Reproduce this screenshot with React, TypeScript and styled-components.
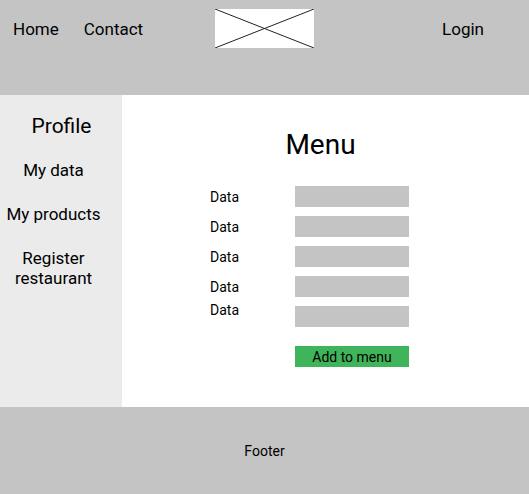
import React from 'react';
import styled, { createGlobalStyle } from 'styled-components';

const GlobalStyle = createGlobalStyle`
  html, body {
    margin: 0;
    padding: 0;
    background: #fff;
  }
  body {
    font-family: Roboto, "Liberation Sans", sans-serif;
    color: #000;
  }
`;

const Page = styled.div`
  display: flex;
  flex-direction: column;
  width: 529px;
  height: 494px;
`;

const Header = styled.header`
  display: flex;
  align-items: flex-start;
  height: 95px;
  padding: 9px 45px 0 13px;
  box-sizing: border-box;
  background: #c4c4c4;
`;

const NavLink = styled.span<{ $gap?: number }>`
  font-size: 17px;
  line-height: 41px;
  margin-right: ${(p) => p.$gap ?? 0}px;
`;

const Logo = styled.svg`
  display: block;
  width: 99px;
  height: 39px;
  background: #fff;
`;

const Spacer = styled.div`
  flex: 1;
`;

const Body = styled.div`
  display: flex;
  height: 312px;
`;

const Sidebar = styled.aside`
  display: flex;
  flex-direction: column;
  align-items: center;
  gap: 24px;
  width: 122px;
  padding: 21px 15px 0 0;
  box-sizing: border-box;
  background: #ebebeb;
`;

const SideTitle = styled.div`
  margin-left: 16px;
  font-size: 21px;
  line-height: 20px;
`;

const SideItem = styled.div`
  font-size: 17px;
  line-height: 20px;
  text-align: center;
`;

const Main = styled.main`
  flex: 1;
  display: flex;
  flex-direction: column;
  align-items: center;
  padding-top: 33px;
  background: #fff;
`;

const Title = styled.h1`
  margin: 0 0 0 -10px;
  font-size: 28px;
  font-weight: 400;
  line-height: 34px;
`;

const Form = styled.div`
  display: grid;
  grid-template-columns: 85px 114px;
  row-gap: 9px;
  margin: 24px 0 0 -32px;
`;

const Label = styled.span<{ $lift?: number }>`
  height: 21px;
  box-sizing: border-box;
  padding-top: 1px;
  font-size: 14px;
  line-height: 20px;
  margin-top: ${(p) => -(p.$lift ?? 0)}px;
`;

const Input = styled.div`
  height: 21px;
  background: #c4c4c4;
`;

const Button = styled.div`
  grid-column: 2;
  margin-top: 10px;
  height: 21px;
  background: #40b45a;
  font-size: 14px;
  line-height: 22px;
  text-align: center;
`;

const Footer = styled.footer`
  display: flex;
  align-items: center;
  justify-content: center;
  flex: 1;
  background: #c4c4c4;
  font-size: 14px;
`;

const rows = [0, 0, 0, 0, 7];

export default function App() {
  return (
    <>
      <GlobalStyle />
      <Page>
        <Header>
          <NavLink $gap={25}>Home</NavLink>
          <NavLink $gap={72}>Contact</NavLink>
          <Logo viewBox="0 0 99 39">
            <line x1="0" y1="0" x2="99" y2="39" stroke="#222" strokeWidth="1" />
            <line x1="0" y1="39" x2="99" y2="0" stroke="#222" strokeWidth="1" />
          </Logo>
          <Spacer />
          <NavLink>Login</NavLink>
        </Header>
        <Body>
          <Sidebar>
            <SideTitle>Profile</SideTitle>
            <SideItem>My data</SideItem>
            <SideItem>My products</SideItem>
            <SideItem>
              Register
              <br />
              restaurant
            </SideItem>
          </Sidebar>
          <Main>
            <Title>Menu</Title>
            <Form>
              {rows.map((lift, i) => (
                <React.Fragment key={i}>
                  <Label $lift={lift}>Data</Label>
                  <Input />
                </React.Fragment>
              ))}
              <Button>Add to menu</Button>
            </Form>
          </Main>
        </Body>
        <Footer>Footer</Footer>
      </Page>
    </>
  );
}
